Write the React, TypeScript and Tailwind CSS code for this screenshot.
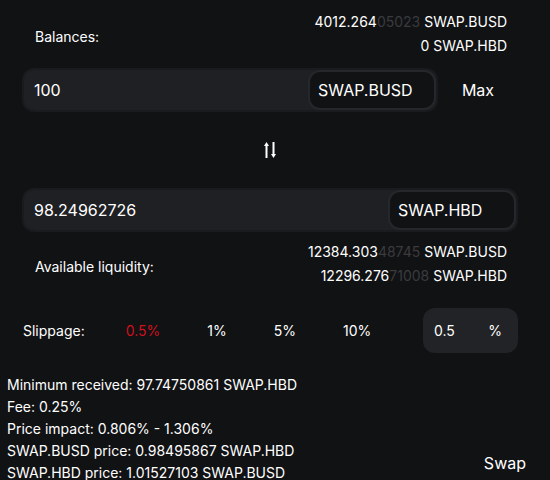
/** A number whose trailing digits are shown dimmed, like the reference balance readout. */
function Amount({ bright, dim, unit }: { bright: string; dim?: string; unit: string }) {
  return (
    <div className="leading-[24px]">
      <span className="text-white">{bright}</span>
      {dim && <span className="text-[#3a3b3e]">{dim}</span>}
      <span className="text-white"> {unit}</span>
    </div>
  );
}

function TokenInput({ value, token, wide }: { value: string; token: string; wide?: boolean }) {
  return (
    <div
      className={`flex h-[44px] items-stretch rounded-xl border-2 border-[#1a1b1e] bg-[#1f2023] ${
        wide ? 'w-full' : 'w-[416px]'
      }`}
    >
      <div className="flex flex-1 items-center pl-[10px] text-[16px] text-white">{value}</div>
      <div className="flex w-[128px] items-center rounded-xl border-2 border-[#26272a] bg-[#111214] pl-[8px] text-[16px] text-white">
        {token}
      </div>
    </div>
  );
}

/** Up/down swap arrows with solid heads. */
function SwapArrows() {
  return (
    <svg width="12" height="16" viewBox="0 0 12 16" fill="currentColor" className="text-white">
      <path d="M2.5 0 L5 4 H3.5 V16 H1.5 V4 H0 Z" />
      <path d="M9.5 16 L12 12 H10.5 V0 H8.5 V12 H7 Z" />
    </svg>
  );
}

export default function App() {
  const slippages = ['0.5%', '1%', '5%', '10%'];
  return (
    <div className="min-h-[480px] bg-[#111214] font-['Inter',sans-serif] text-[14px] text-white">
      <div className="pl-[22px] pr-[32px] pt-[10px]">
        {/* Balances */}
        <div className="flex items-center justify-between pl-[13px] pr-[11px]">
          <span className="pt-[4px]">Balances:</span>
          <div className="text-right">
            <Amount bright="4012.264" dim="05023" unit="SWAP.BUSD" />
            <Amount bright="0" unit="SWAP.HBD" />
          </div>
        </div>

        {/* From */}
        <div className="mt-[10px] flex items-center">
          <TokenInput value="100" token="SWAP.BUSD" />
          <button className="flex-1 text-center text-[16px] text-white">Max</button>
        </div>

        {/* Flip */}
        <div className="flex h-[76px] items-center justify-center">
          <SwapArrows />
        </div>

        {/* To */}
        <TokenInput value="98.24962726" token="SWAP.HBD" wide />

        {/* Liquidity */}
        <div className="mt-[8px] flex items-center justify-between pl-[13px] pr-[11px]">
          <span className="pt-[4px]">Available liquidity:</span>
          <div className="text-right">
            <Amount bright="12384.303" dim="48745" unit="SWAP.BUSD" />
            <Amount bright="12296.276" dim="71008" unit="SWAP.HBD" />
          </div>
        </div>

        {/* Slippage */}
        <div className="mt-[20px] flex items-center">
          <span className="ml-[1px] mr-[41px]">Slippage:</span>
          <div className="flex gap-[47px]">
            {slippages.map((s, i) => (
              <button key={s} className={i === 0 ? 'text-[#d0101c]' : 'text-white'}>
                {s}
              </button>
            ))}
          </div>
          <div className="ml-auto flex h-[45px] w-[95px] items-center justify-between rounded-xl bg-[#222326] pl-[11px] pr-[16px]">
            <span>0.5</span>
            <span>%</span>
          </div>
        </div>
      </div>

      {/* Summary */}
      <div className="mt-[21px] flex items-end justify-between pl-[7px] pr-[24px]">
        <div className="leading-[22px]">
          <div>Minimum received: 97.74750861 SWAP.HBD</div>
          <div>Fee: 0.25%</div>
          <div>Price impact: 0.806% - 1.306%</div>
          <div>SWAP.BUSD price: 0.98495867 SWAP.HBD</div>
          <div>SWAP.HBD price: 1.01527103 SWAP.BUSD</div>
        </div>
        <button className="pb-[9px] text-[16px] leading-[24px] text-white">Swap</button>
      </div>
    </div>
  );
}
